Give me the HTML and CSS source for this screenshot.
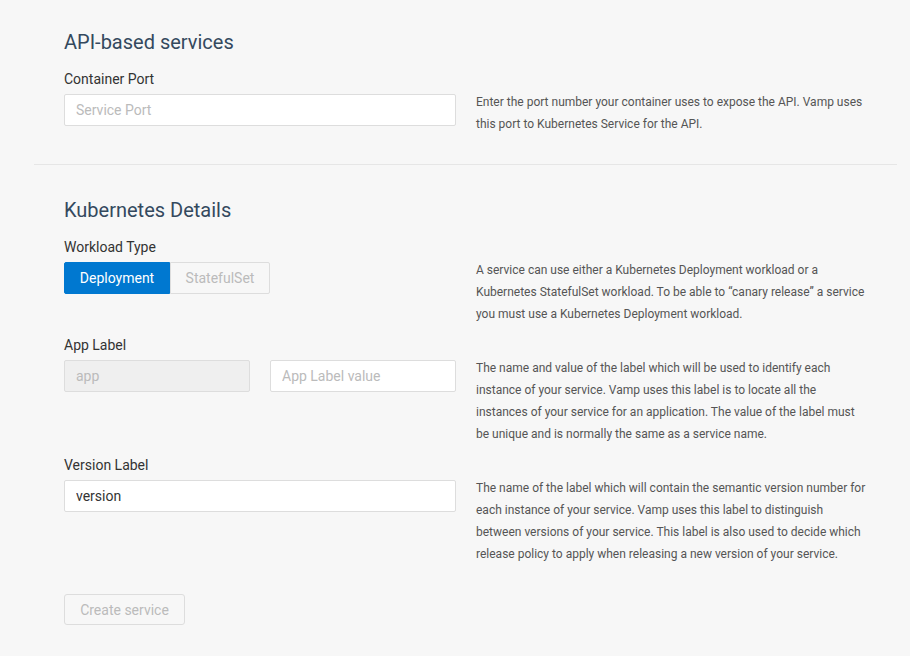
FILE: index.html
```html
<!DOCTYPE html>
<html>
<head>
<meta charset="utf-8">
<link rel="stylesheet" href="styles.css">
</head>
<body>
<div class="page">
  <section class="section">
    <h2 class="heading">API-based services</h2>
    <div class="row">
      <div class="field">
        <label class="label">Container Port</label>
        <input class="input" type="text" placeholder="Service Port">
      </div>
      <p class="help">Enter the port number your container uses to expose the API. Vamp uses this port to Kubernetes Service for the API.</p>
    </div>
  </section>
  <hr class="divider">
  <section class="section">
    <h2 class="heading">Kubernetes Details</h2>
    <div class="row">
      <div class="field">
        <label class="label">Workload Type</label>
        <div class="segmented">
          <button class="seg seg-active">Deployment</button>
          <button class="seg">StatefulSet</button>
        </div>
      </div>
      <p class="help">A service can use either a Kubernetes Deployment workload or a Kubernetes StatefulSet workload. To be able to “canary release” a service you must use a Kubernetes Deployment workload.</p>
    </div>
    <div class="row">
      <div class="field">
        <label class="label">App Label</label>
        <div class="pair">
          <input class="input input-disabled" type="text" value="app" disabled>
          <input class="input" type="text" placeholder="App Label value">
        </div>
      </div>
      <p class="help">The name and value of the label which will be used to identify each instance of your service. Vamp uses this label is to locate all the instances of your service for an application. The value of the label must be unique and is normally the same as a service name.</p>
    </div>
    <div class="row">
      <div class="field">
        <label class="label">Version Label</label>
        <input class="input" type="text" value="version">
      </div>
      <p class="help">The name of the label which will contain the semantic version number for each instance of your service. Vamp uses this label to distinguish between versions of your service. This label is also used to decide which release policy to apply when releasing a new version of your service.</p>
    </div>
    <button class="submit" disabled>Create service</button>
  </section>
</div>
</body>
</html>
```

FILE: styles.css
```css
* { box-sizing: border-box; }
html, body {
  margin: 0;
  padding: 0;
  background: #f7f7f7;
  font-family: Roboto, "Liberation Sans", sans-serif;
  color: #333;
}
.page {
  margin-left: 34px;
  width: 863px;
  padding-top: 30px;
}
.section {
  padding: 0 30px;
}
.heading {
  margin: 0 0 15px;
  font-size: 20px;
  line-height: 24px;
  font-weight: 400;
  color: #34495e;
}
.row {
  display: grid;
  grid-template-columns: 392px 392px;
  column-gap: 20px;
  margin-bottom: 10px;
}
.field {
  display: flex;
  flex-direction: column;
}
.label {
  font-size: 14px;
  line-height: 21px;
  margin-bottom: 4px;
  color: #333;
}
.input {
  height: 32px;
  width: 100%;
  border: 1px solid #ddd;
  border-radius: 2px;
  background: #fff;
  padding: 0 11px;
  font-family: inherit;
  font-size: 14px;
  color: #333;
  outline: none;
}
.input::placeholder { color: #bbb; }
.input-disabled {
  background: #efefef;
  color: #bbb;
}
.pair {
  display: grid;
  grid-template-columns: 186px 186px;
  column-gap: 20px;
}
.help {
  margin: 22px 0 0;
  font-size: 12px;
  line-height: 22px;
  color: #555;
}
.divider {
  margin: 29px 0 33px;
  border: 0;
  border-top: 1px solid #e6e6e6;
  height: 0;
}
.segmented {
  display: flex;
  height: 32px;
}
.seg {
  height: 32px;
  border: 1px solid #ddd;
  background: #f7f7f7;
  color: #bbb;
  font-family: inherit;
  font-size: 14px;
  padding: 0;
  width: 100px;
  border-radius: 0 2px 2px 0;
}
.seg-active {
  width: 106px;
  background: #0078d0;
  border-color: #0078d0;
  color: #fff;
  border-radius: 2px 0 0 2px;
}
.submit {
  margin-top: 19px;
  height: 31px;
  width: 121px;
  border: 1px solid #ddd;
  border-radius: 3px;
  background: #f7f7f7;
  color: #bbb;
  font-family: inherit;
  font-size: 14px;
  padding: 0;
}
```
